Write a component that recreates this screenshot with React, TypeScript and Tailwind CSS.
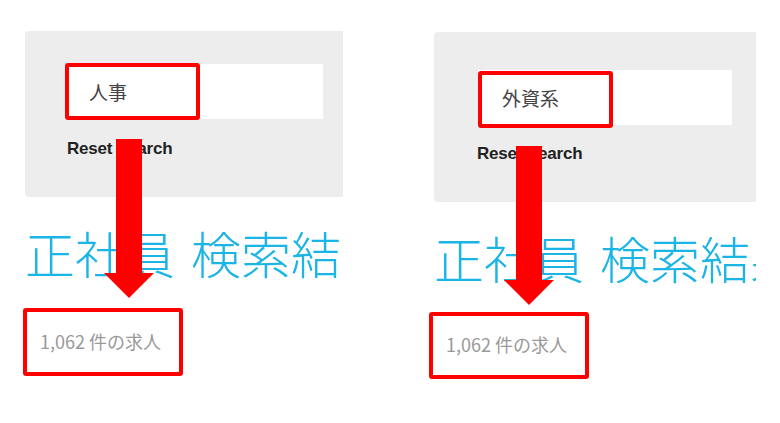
import React from "react";

const CJK = "font-['Noto_Sans_CJK_JP','Noto_Sans',sans-serif]";

interface PanelProps {
  width: number;
  label: string;
  grayMl: string;
  grayTop: string;
  grayH: string;
  inputPad: string;
  inputW: string;
  redTop: string;
  resetPad: string;
  titleMt: string;
  countMt: string;
  countH: string;
  arrowPos: string;
}

function DownArrow({ className }: { className: string }) {
  return (
    <svg className={className} width="50" height="159" viewBox="0 0 50 159">
      <rect x="12" y="0" width="26" height="135" fill="#ff0000" />
      <polygon points="0,134 50,134 25,159" fill="#ff0000" />
    </svg>
  );
}

function Panel(p: PanelProps) {
  return (
    <div className="relative h-full overflow-hidden shrink-0" style={{ width: p.width }}>
      {/* Search box */}
      <div
        className={`${p.grayMl} ${p.grayTop} ${p.grayH} w-[360px] bg-[#ededed] rounded-[4px] ${p.inputPad}`}
      >
        <div className={`relative ${p.inputW} h-[55px] bg-white flex items-center pl-[24px]`}>
          <span className={`${CJK} text-[19px] text-[#444] leading-none`}>{p.label}</span>
          <div
            className={`absolute left-0 ${p.redTop} w-[135px] h-[57px] border-4 border-[#ff0000] rounded-[3px]`}
          />
        </div>
        <div
          className={`${p.resetPad} font-['Liberation_Sans',Arial,sans-serif] font-bold text-[17px] leading-[20px] text-[#222] tracking-[-0.2px]`}
        >
          Reset Search
        </div>
      </div>

      {/* Title (clipped by the panel edge, as in the screenshot) */}
      <h1
        className={`${p.grayMl} ${p.titleMt} ${CJK} font-light text-[50px] leading-none text-[#1bb4e6] whitespace-nowrap [word-spacing:5px]`}
      >
        正社員 検索結果
      </h1>

      {/* Count */}
      <div
        className={`${p.countMt} ${p.countH} w-[160px] border-4 border-[#ff0000] rounded-[3px] flex items-center pl-[13px] pb-[3px]`}
      >
        <span className={`${CJK} text-[18px] text-[#999] leading-none`}>1,062 件の求人</span>
      </div>

      <DownArrow className={`absolute ${p.arrowPos}`} />
    </div>
  );
}

export default function App() {
  return (
    <div className="w-[780px] h-[423px] bg-white flex overflow-hidden">
      <div className="w-[23px] shrink-0" />
      <Panel
        width={320}
        label="人事"
        grayMl="ml-[2px]"
        grayTop="mt-[31px]"
        grayH="h-[166px]"
        inputPad="pt-[33px] pl-[40px]"
        inputW="w-[258px]"
        redTop="top-[-1px]"
        resetPad="mt-[20px] ml-[2px]"
        titleMt="mt-[30px]"
        countMt="mt-[31px]"
        countH="h-[68px]"
        arrowPos="left-[81px] top-[139px]"
      />
      <div className="w-[86px] shrink-0" />
      <Panel
        width={327}
        label="外資系"
        grayMl="ml-[5px]"
        grayTop="mt-[32px]"
        grayH="h-[170px]"
        inputPad="pt-[38px] pl-[44px]"
        inputW="w-[254px]"
        redTop="top-[1px]"
        resetPad="mt-[19px] ml-[-1px]"
        titleMt="mt-[30px]"
        countMt="mt-[30px]"
        countH="h-[67px]"
        arrowPos="left-[75px] top-[146px]"
      />
    </div>
  );
}
